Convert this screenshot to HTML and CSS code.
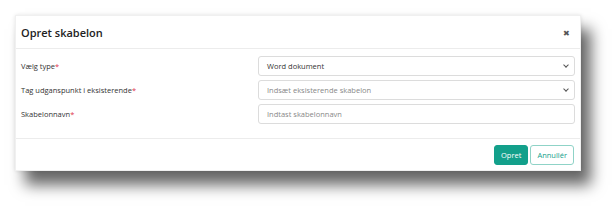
FILE: index.html
```html
<!DOCTYPE html>
<html>
<head>
<link rel="stylesheet" href="styles.css">
</head>
<body>
  <div class="modal">
    <div class="modal-header">
      <h2 class="modal-title">Opret skabelon</h2>
      <span class="close">&#x2716;</span>
    </div>
    <div class="modal-body">
      <div class="form-row">
        <label>Vælg type<span class="req">*</span></label>
        <div class="field select">Word dokument</div>
      </div>
      <div class="form-row">
        <label>Tag udganspunkt i eksisterende<span class="req">*</span></label>
        <div class="field select placeholder">Indsæt eksisterende skabelon</div>
      </div>
      <div class="form-row">
        <label>Skabelonnavn<span class="req">*</span></label>
        <div class="field placeholder">Indtast skabelonnavn</div>
      </div>
    </div>
    <div class="modal-footer">
      <button class="btn btn-primary">Opret</button>
      <button class="btn btn-outline">Annullér</button>
    </div>
  </div>
</body>
</html>
```

FILE: styles.css
```css
html {
  background: #fff;
}

body {
  margin: 0;
  min-height: 207px;
  box-sizing: border-box;
  padding: 15px 0 0 15px;
  font-family: "Open Sans", "Liberation Sans", sans-serif;
  color: #333;
}

.modal {
  width: 566px;
  height: 156px;
  background: #fff;
  border: 1px solid #f0f0f0;
  box-sizing: border-box;
  display: flex;
  flex-direction: column;
  box-shadow: 10px 14px 14px rgba(0, 0, 0, 0.6), 0 0 4px rgba(0, 0, 0, 0.1);
}

.modal-header {
  height: 32px;
  border-bottom: 1px solid #ececec;
  display: flex;
  align-items: center;
  justify-content: space-between;
  padding: 0 10px 0 5px;
}

.modal-title {
  margin: 0;
  font-size: 11px;
  font-weight: 600;
  color: #222;
}

.close {
  font-size: 8px;
  color: #555;
}

.modal-body {
  padding: 7px 5px 14px 5px;
  display: flex;
  flex-direction: column;
  gap: 4px;
  border-bottom: 1px solid #ececec;
}

.form-row {
  display: flex;
  align-items: center;
  height: 20px;
}

.form-row label {
  width: 237px;
  font-size: 7.5px;
  color: #333;
}

.req {
  color: #e0334a;
}

.field {
  flex: 1;
  box-sizing: border-box;
  height: 20px;
  border: 1px solid #dcdcdc;
  border-radius: 3px;
  padding: 0 8px;
  font-size: 7.5px;
  line-height: 18px;
  color: #333;
  position: relative;
}

.field.placeholder {
  color: #888;
}

.select::after {
  content: "";
  position: absolute;
  right: 6px;
  top: 6px;
  width: 3px;
  height: 3px;
  border-right: 1.2px solid #555;
  border-bottom: 1.2px solid #555;
  transform: rotate(45deg);
}

.modal-footer {
  flex: 1;
  display: flex;
  justify-content: flex-end;
  align-items: center;
  gap: 2px;
  padding: 0 6px 0 0;
}

.btn {
  height: 20px;
  font-family: inherit;
  font-size: 7.5px;
  border-radius: 3px;
  padding: 0 6px;
  cursor: pointer;
}

.btn-primary {
  background: #13a08b;
  border: 1px solid #13a08b;
  color: #fff;
}

.btn-outline {
  background: #fff;
  border: 1px solid #8fd3c7;
  color: #13a08b;
}
```
